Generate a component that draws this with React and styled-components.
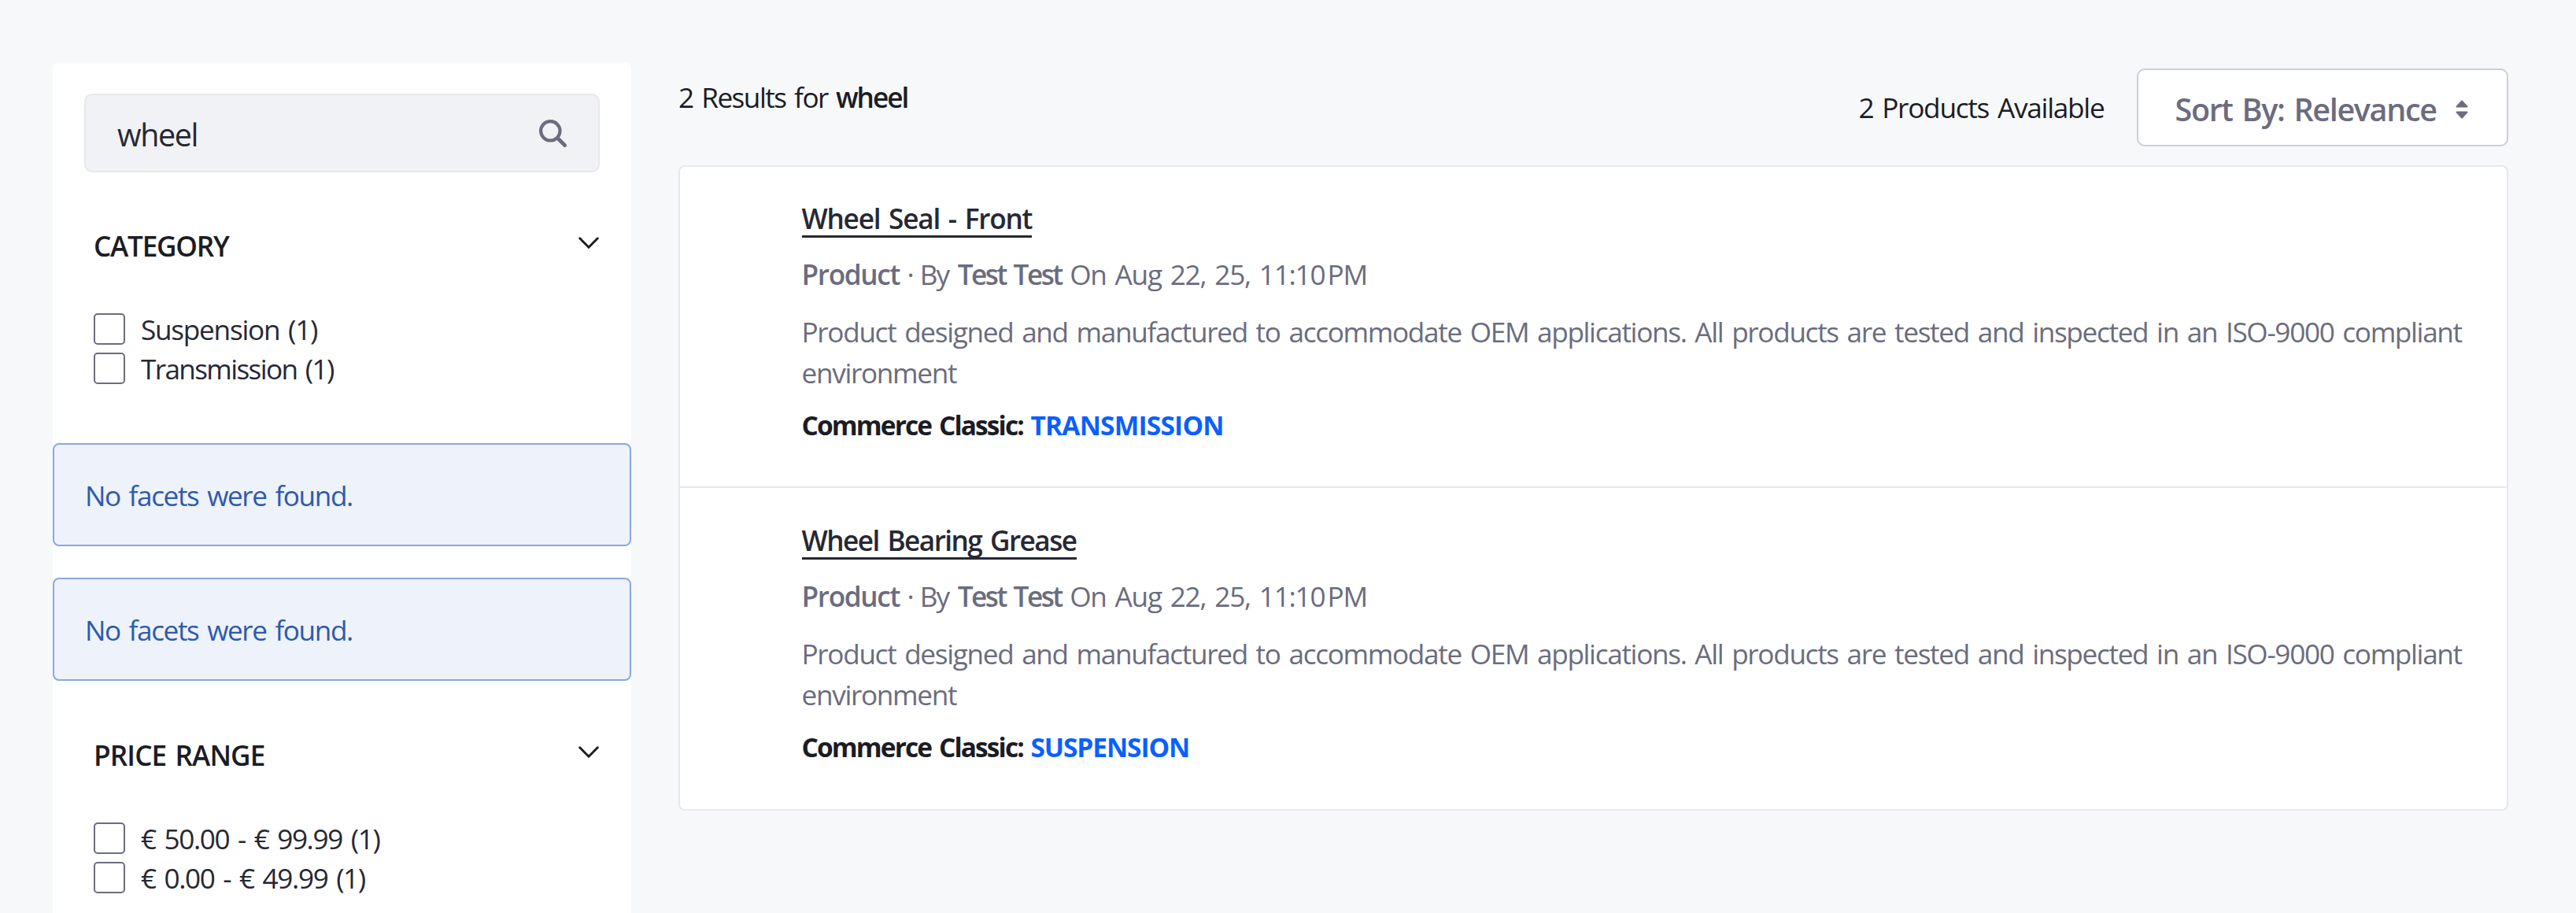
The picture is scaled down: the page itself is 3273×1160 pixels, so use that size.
import React from "react";
import styled, { createGlobalStyle } from "styled-components";

const GlobalStyle = createGlobalStyle`
  *, *::before, *::after { box-sizing: border-box; }
  html, body { height: 100%; }
  body {
    margin: 0;
    background: #f7f8fa;
    color: #1c1c24;
    font-family: "Open Sans", "Noto Sans", sans-serif;
    font-size: 35.2px;
    line-height: 52px;
    word-spacing: 3px;
  }
  #root { height: 100%; }
`;

const Page = styled.div`
  display: flex;
  align-items: flex-start;
  gap: 60px;
  width: 3273px;
  height: 1160px;
  padding: 79px 86px 0 67px;
  overflow: hidden;
`;

const Text = styled.span`
  white-space: pre;
  flex: none;
  letter-spacing: ${(p) => p.$track || 0}px;
  font-weight: ${(p) => p.$weight || 400};
  margin-left: ${(p) => p.$gap || 0}px;
`;

/* Sidebar */

const Sidebar = styled.aside`
  display: flex;
  flex-direction: column;
  flex: none;
  width: 735px;
  height: 1081px;
  background: #fff;
  border-radius: 8px 8px 0 0;
`;

const SearchBar = styled.div`
  display: flex;
  align-items: center;
  justify-content: space-between;
  flex: none;
  height: 100px;
  margin: 40px 40px 0;
  padding: 0 40px;
  background: #f1f2f5;
  border: 2px solid #e7e7ed;
  border-radius: 10px;
  color: #272833;
  font-size: 39.5px;
`;

const SearchValue = styled(Text)`
  padding-top: 4px;
`;

const SearchIcon = styled.svg`
  width: 35px;
  height: 35px;
  color: #6b6c7e;
`;

const Facet = styled.section`
  display: flex;
  flex-direction: column;
  flex: none;
  margin-top: ${(p) => p.$space}px;
  padding: 0 41px 0 52px;
`;

const FacetHeader = styled.header`
  display: flex;
  justify-content: space-between;
  align-items: flex-start;
  height: 52px;
  margin-bottom: 55px;
`;

const Chevron = styled.svg`
  width: 26px;
  height: 16px;
  margin-top: 15px;
`;

const FacetOption = styled.label`
  display: flex;
  align-items: center;
  gap: 20px;
  height: 50px;
  line-height: 50px;
  color: #272833;
`;

const Checkbox = styled.span`
  flex: none;
  width: 40px;
  height: 40px;
  background: #fff;
  border: 2px solid #6b6c7e;
  border-radius: 5px;
`;

const Alert = styled.div`
  display: flex;
  align-items: center;
  flex: none;
  height: 131px;
  margin-top: ${(p) => p.$space}px;
  padding: 0 39px;
  background: #edf2fb;
  border: 2px solid #89a7e0;
  border-radius: 8px;
  color: #2e5aac;
`;

/* Results */

const Main = styled.main`
  display: flex;
  flex-direction: column;
  flex: 1;
  min-width: 0;
  padding-top: 8px;
`;

const Toolbar = styled.div`
  display: flex;
  align-items: flex-start;
  justify-content: space-between;
  height: 123px;
`;

const Summary = styled.div`
  display: flex;
  padding-top: 10px;
`;

const Sorting = styled.div`
  display: flex;
  align-items: center;
  gap: 41px;
`;

const ProductCount = styled(Text)`
  padding-bottom: 1px;
`;

const SortButton = styled.button`
  display: flex;
  align-items: center;
  width: 472.5px;
  height: 99px;
  padding: 4px 0 0 47px;
  gap: 24px;
  background: #fff;
  border: 2px solid #cdced9;
  border-radius: 10px;
  color: #6b6c7e;
  font: 600 39.5px/52px "Open Sans", "Noto Sans", sans-serif;
  word-spacing: 3px;
`;

const SortIcon = styled.svg`
  width: 16px;
  height: 24px;
  margin-top: 1px;
`;

const ResultList = styled.ul`
  list-style: none;
  margin: 0;
  padding: 0;
  background: #fff;
  border: 2px solid #e7e7ed;
  border-radius: 8px;
`;

const ResultItem = styled.li`
  display: flex;
  flex-direction: column;
  align-items: flex-start;
  padding: 44px 30px 52px 154.5px;
  & + & {
    border-top: 2px solid #e7e7ed;
    padding-top: 44.4px;
  }
  &:last-child {
    padding-bottom: 53.4px;
  }
`;

const ResultTitle = styled.a`
  display: block;
  line-height: 43px;
  border-bottom: 3px solid #272833;
  color: #272833;
  font-weight: 600;
  letter-spacing: ${(p) => p.$track}px;
  margin-bottom: 20.2px;
`;

const Meta = styled.div`
  display: flex;
  color: #6b6c7e;
  margin-bottom: 21px;
`;

const Description = styled.p`
  margin: 0 0 15px;
  color: #6b6c7e;
  letter-spacing: -1.34px;
`;

const Catalog = styled.div`
  display: flex;
  color: #1c1c24;
  font-size: 33.5px;
`;

const CategoryLink = styled(Text)`
  color: #0b5fff;
`;

function FacetPanel({ title, titleTrack, options, space }) {
  return (
    <Facet $space={space}>
      <FacetHeader>
        <Text $weight={600} $track={titleTrack}>{title}</Text>
        <Chevron viewBox="0 0 26 16" fill="none" stroke="currentColor" strokeWidth="3" strokeLinecap="round" strokeLinejoin="miter">
          <path d="M1.7 1.8 13 13.2 24.3 1.8" />
        </Chevron>
      </FacetHeader>
      {options.map((o) => (
        <FacetOption key={o.label}>
          <Checkbox />
          <Text $track={o.track}>{o.label}</Text>
        </FacetOption>
      ))}
    </Facet>
  );
}

function NoFacets({ space }) {
  return (
    <Alert $space={space}>
      <Text $track={-1.41}>No facets were found.</Text>
    </Alert>
  );
}

function Result({ title, titleTrack, category, categoryTrack }) {
  return (
    <ResultItem>
      <ResultTitle $track={titleTrack}>{title}</ResultTitle>
      <Meta>
        <Text $weight={600} $track={-1.34}>Product</Text>
        <Text $gap={9.5}>·</Text>
        <Text $track={-2} $gap={7}>By</Text>
        <Text $weight={600} $track={-2.5} $gap={11.5}>Test Test</Text>
        <Text $track={-1.24} $gap={10.5}>{"On Aug 22, 25, 11:10\u202fPM"}</Text>
      </Meta>
      <Description>
        Product designed and manufactured to accommodate OEM applications. All products are
        tested and inspected in an ISO-9000 compliant environment
      </Description>
      <Catalog>
        <Text $weight={700} $track={-1.9}>Commerce Classic:</Text>
        <CategoryLink $weight={700} $track={categoryTrack} $gap={9.5}>{category}</CategoryLink>
      </Catalog>
    </ResultItem>
  );
}

export default function App() {
  return (
    <>
      <GlobalStyle />
      <Page>
        <Sidebar>
          <SearchBar>
            <SearchValue $track={-1.42}>wheel</SearchValue>
            <SearchIcon viewBox="0 0 35 35" fill="none" stroke="currentColor" strokeLinecap="round">
              <circle cx="14.3" cy="14.3" r="12.2" strokeWidth="4.2" />
              <path d="M24 24 32.6 32.6" strokeWidth="4.8" />
            </SearchIcon>
          </SearchBar>
          <FacetPanel
            space={67}
            title="CATEGORY"
            titleTrack={-1.25}
            options={[
              { label: "Suspension (1)", track: -1.27 },
              { label: "Transmission (1)", track: -1.66 },
            ]}
          />
          <NoFacets space={70} />
          <NoFacets space={40} />
          <FacetPanel
            space={68}
            title="PRICE RANGE"
            titleTrack={-0.9}
            options={[
              { label: "€ 50.00 - € 99.99 (1)", track: -1.39 },
              { label: "€ 0.00 - € 49.99 (1)", track: -1.38 },
            ]}
          />
        </Sidebar>
        <Main>
          <Toolbar>
            <Summary>
              <Text $track={-1.53}>2 Results for</Text>
              <Text $weight={600} $track={-2} $gap={10}>wheel</Text>
            </Summary>
            <Sorting>
              <ProductCount $track={-1.26}>2 Products Available</ProductCount>
              <SortButton type="button">
                <Text $weight={600} $track={-1.34}>Sort By: Relevance</Text>
                <SortIcon viewBox="0 0 16 24" fill="currentColor">
                  <path d="M7.2.8a1.2 1.2 0 0 1 1.6 0l6.3 6.9c.8.9.4 1.8-.7 1.8H1.6C.5 9.5.1 8.6.9 7.7Z" />
                  <path d="M7.2 23.2a1.2 1.2 0 0 0 1.6 0l6.3-6.9c.8-.9.4-1.8-.7-1.8H1.6c-1.1 0-1.5.9-.7 1.8Z" />
                </SortIcon>
              </SortButton>
            </Sorting>
          </Toolbar>
          <ResultList>
            <Result title="Wheel Seal - Front" titleTrack={-1.25} category="TRANSMISSION" categoryTrack={-0.8} />
            <Result title="Wheel Bearing Grease" titleTrack={-1.54} category="SUSPENSION" categoryTrack={-1.1} />
          </ResultList>
        </Main>
      </Page>
    </>
  );
}
